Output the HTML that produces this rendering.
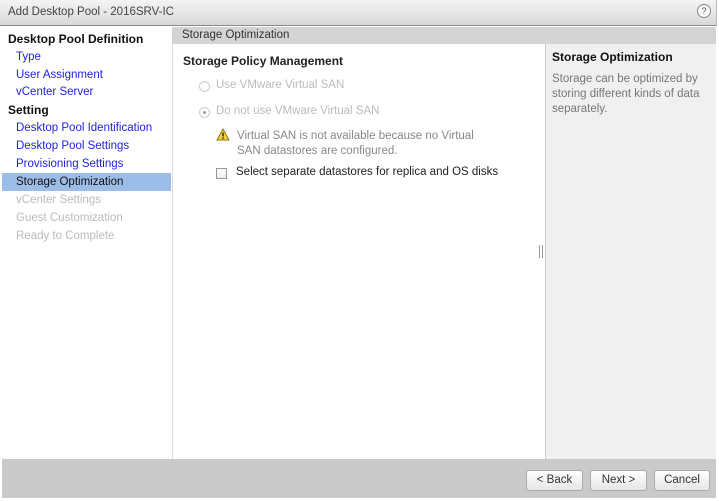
<!DOCTYPE html>
<html><head><style>
*{margin:0;padding:0;box-sizing:border-box}
body{width:719px;height:501px;background:#fff;font-family:"Liberation Sans",sans-serif;font-size:11.5px;position:relative;overflow:hidden;color:#222}
.title{position:absolute;left:0;top:0;width:717px;height:26px;background:linear-gradient(#f4f4f4,#d8d8d8);border-bottom:1px solid #8a8a8a;border-right:1px solid #bbb}
.title span{position:absolute;left:8px;top:6px;color:#444;font-size:11.5px}
.help{position:absolute;left:697px;top:4px;width:14px;height:14px;border:1px solid #888;border-radius:50%;font-size:9px;text-align:center;line-height:12px;color:#555;background:#f8f8f8}
.nav{position:absolute;left:2px;top:27px;width:170px;height:432px;background:#fff}
.nav div{position:absolute;left:0;width:169px;height:18px;line-height:18px}
.h{font-weight:bold;padding-left:6px;color:#111;font-size:12px}
.l{padding-left:14px;color:#2222dd}
.d{padding-left:14px;color:#bbb}
.sel{background:#9dbde9;color:#111 !important}
.strip{position:absolute;left:172px;top:27px;width:544px;height:17px;background:#d4d4d4;color:#333;padding-left:10px;line-height:16px}
.main{position:absolute;left:172px;top:44px;width:373px;height:415px;background:#fff;border-left:1px solid #ddd}
.side{position:absolute;left:545px;top:44px;width:171px;height:415px;background:#f0f0f0;border-left:1px solid #ccc}
.foot{position:absolute;left:2px;top:459px;width:714px;height:39px;background:#cacaca}
.btn{position:absolute;top:470px;height:21px;border:1px solid #aaa;border-radius:3px;background:linear-gradient(#fff,#e6e6e6);text-align:center;line-height:19px;color:#333}
</style></head><body>
<div class="title"><span>Add Desktop Pool - 2016SRV-IC</span><div class="help">?</div></div>
<div class="nav">
<div class="h" style="top:3px">Desktop Pool Definition</div>
<div class="l" style="top:21px">Type</div>
<div class="l" style="top:39px">User Assignment</div>
<div class="l" style="top:56px">vCenter Server</div>
<div class="h" style="top:74px">Setting</div>
<div class="l" style="top:92px">Desktop Pool Identification</div>
<div class="l" style="top:110px">Desktop Pool Settings</div>
<div class="l" style="top:128px">Provisioning Settings</div>
<div class="l sel" style="top:146px">Storage Optimization</div>
<div class="d" style="top:164px">vCenter Settings</div>
<div class="d" style="top:182px">Guest Customization</div>
<div class="d" style="top:200px">Ready to Complete</div>
</div>
<div class="strip">Storage Optimization</div>
<div class="main">
<div style="position:absolute;left:10px;top:10px;font-weight:bold;font-size:12px;color:#222">Storage Policy Management</div>
<div style="position:absolute;left:26px;top:37px;width:11px;height:11px;border:1px solid #ccc;border-radius:50%"></div>
<div style="position:absolute;left:43px;top:35px;color:#bbb">Use VMware Virtual SAN</div>
<div style="position:absolute;left:26px;top:63px;width:11px;height:11px;border:1px solid #ccc;border-radius:50%"><div style="position:absolute;left:3px;top:3px;width:3px;height:3px;background:#999;border-radius:50%"></div></div>
<div style="position:absolute;left:43px;top:61px;color:#bbb">Do not use VMware Virtual SAN</div>
<svg style="position:absolute;left:43px;top:84px" width="14" height="13"><path d="M7 1L13 12H1Z" fill="#f4d23a" stroke="#8a7a10"/><rect x="6.3" y="4.5" width="1.4" height="4" fill="#222"/><rect x="6.3" y="9.5" width="1.4" height="1.4" fill="#222"/></svg>
<div style="position:absolute;left:64px;top:85px;color:#888;line-height:15px">Virtual SAN is not available because no Virtual<br>SAN datastores are configured.</div>
<div style="position:absolute;left:43px;top:124px;width:11px;height:11px;border:1px solid #999;background:linear-gradient(#fff,#eee)"></div>
<div style="position:absolute;left:63px;top:122px;color:#222">Select separate datastores for replica and OS disks</div>
<div style="position:absolute;left:366px;top:201px;width:4px;height:13px;border-left:1px solid #999;border-right:1px solid #999"></div>
</div>
<div class="side">
<div style="position:absolute;left:6px;top:6px;font-weight:bold;font-size:12px;color:#111">Storage Optimization</div>
<div style="position:absolute;left:6px;top:28px;color:#777;line-height:15px">Storage can be optimized by<br>storing different kinds of data<br>separately.</div>
</div>
<div class="foot"></div>
<div class="btn" style="left:526px;width:57px">&lt; Back</div>
<div class="btn" style="left:590px;width:57px">Next &gt;</div>
<div class="btn" style="left:654px;width:56px">Cancel</div>
</body></html>
